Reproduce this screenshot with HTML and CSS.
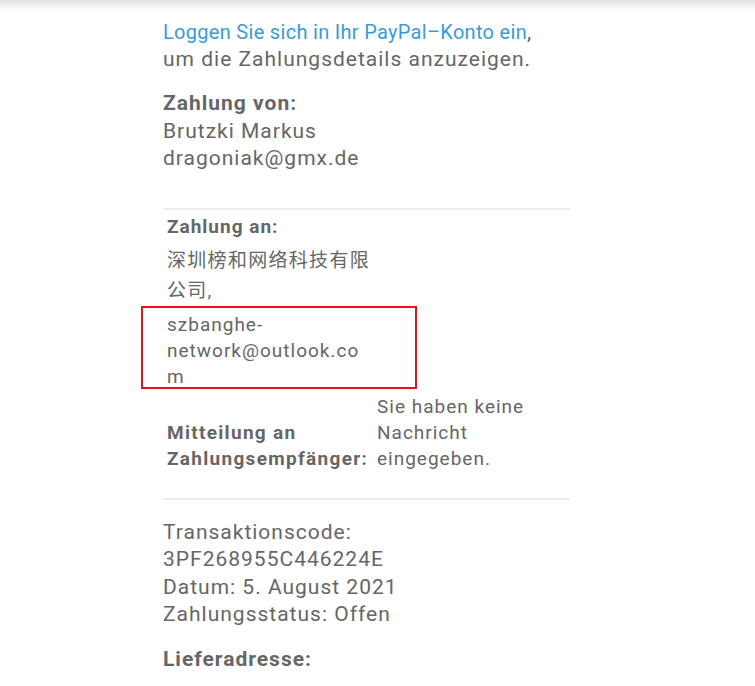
FILE: index.html
```html
<!DOCTYPE html>
<html lang="de">
<head>
<meta charset="utf-8">
<title>PayPal</title>
<link rel="stylesheet" href="styles.css">
</head>
<body>
<div class="topshade"></div>
<main class="content">
  <p class="intro"><a class="link" href="#">Loggen Sie sich in Ihr PayPal–Konto ein</a>,<br>um die Zahlungsdetails anzuzeigen.</p>
  <p class="block"><strong>Zahlung von:</strong><br>Brutzki Markus<br>dragoniak@gmx.de</p>
  <hr class="rule rule-top">
  <div class="table">
    <div class="cell label-cell">
      <div class="lbl">Zahlung an:</div>
      <div class="cjk">深圳榜和网络科技有限公司,</div>
      <div class="email">szbanghe-network@outlook.com</div>
    </div>
    <div class="cell"></div>
    <div class="cell msg-label"><strong>Mitteilung an Zahlungsempfänger:</strong></div>
    <div class="cell msg-value">Sie haben keine Nachricht eingegeben.</div>
  </div>
  <hr class="rule rule-bottom">
  <p class="block details">Transaktionscode:<br>3PF268955C446224E<br>Datum: 5. August 2021<br>Zahlungsstatus: Offen</p>
  <p class="block"><strong>Lieferadresse:</strong></p>
</main>
</body>
</html>
```

FILE: styles.css
```css
html, body {
  margin: 0;
  padding: 0;
  background: #ffffff;
}
body {
  font-family: Roboto, "Noto Sans CJK SC", sans-serif;
  color: #666666;
  width: 755px;
  height: 686px;
  overflow: hidden;
}
.topshade {
  height: 10px;
  background: linear-gradient(to bottom, #e0e0e0, #ffffff);
}
.content {
  margin-left: 163px;
  width: 407px;
  padding-top: 9px;
}
.intro, .block {
  margin: 0;
  font-size: 21px;
  letter-spacing: 1px;
  line-height: 27.5px;
}
.intro {
  line-height: 26.5px;
  margin-bottom: 18px;
}
.link {
  color: #3a9bd7;
  text-decoration: none;
  font-size: 20px;
  letter-spacing: 0.3px;
}
strong { font-weight: 700; }
.rule {
  border: 0;
  height: 2px;
  background: #ececec;
  margin: 0;
}
.rule-top { margin-top: 35px; }
.table {
  display: grid;
  grid-template-columns: 204px 176px;
  margin-left: 4px;
  font-size: 19px;
  letter-spacing: 1px;
  line-height: 26px;
  padding-top: 4px;
}
.label-cell { display: flex; flex-direction: column; }
.lbl { font-weight: 700; padding-bottom: 6px; }
.cjk { line-height: 30px; letter-spacing: 1.3px; }
.email {
  position: relative;
  margin-top: 6px;
  overflow-wrap: anywhere;
}
.email::after {
  content: "";
  position: absolute;
  left: -26px;
  top: -6px;
  width: 276px;
  height: 83px;
  border: 2px solid #e8141a;
  box-sizing: border-box;
}
.msg-label {
  align-self: end;
  letter-spacing: 1.3px;
}
.msg-value {
  padding-top: 4px;
  padding-left: 6px;
}
.rule-bottom { margin-top: 26px; }
.details { margin-top: 19px; }
.details + .block { margin-top: 17px; }
```
